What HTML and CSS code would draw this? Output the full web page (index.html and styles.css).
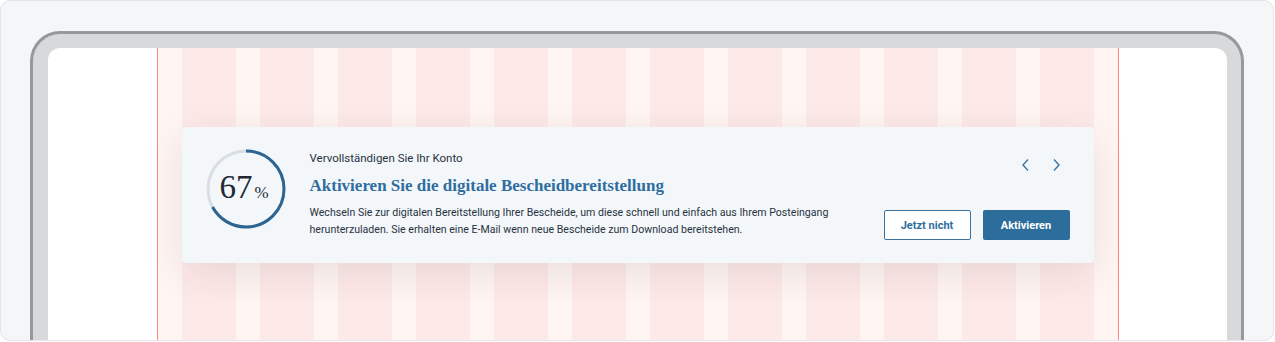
FILE: index.html
```html
<!DOCTYPE html>
<html lang="de">
<head>
  <meta charset="UTF-8" />
  <meta name="viewport" content="width=device-width, initial-scale=1" />
  <title>Konto vervollständigen</title>
  <link rel="stylesheet" href="styles.css">
</head>
<body>
  <div class="frame">
    <div class="device">
      <div class="screen">
        <div class="layout">
          <div class="columns">
            <span></span><span></span><span></span><span></span><span></span><span></span>
            <span></span><span></span><span></span><span></span><span></span><span></span>
          </div>

          <section class="card">
            <div class="progress">
              <svg width="80" height="80" viewBox="0 0 80 80">
                <circle class="progress-track" cx="40" cy="40" r="38" />
                <circle class="progress-bar" cx="40" cy="40" r="38" stroke-dasharray="160 239" transform="rotate(-90 40 40)" />
              </svg>
              <div class="progress-value">67<span>%</span></div>
            </div>

            <div class="content">
              <p class="eyebrow">Vervollständigen Sie Ihr Konto</p>
              <h2 class="title">Aktivieren Sie die digitale Bescheidbereitstellung</h2>
              <p class="text">Wechseln Sie zur digitalen Bereitstellung Ihrer Bescheide, um diese schnell und einfach aus Ihrem Posteingang herunterzuladen. Sie erhalten eine E-Mail wenn neue Bescheide zum Download bereitstehen.</p>
            </div>

            <div class="actions">
              <div class="pager">
                <button class="pager-btn" aria-label="Zurück">
                  <svg width="10" height="14" viewBox="0 0 10 14"><polyline points="7,1.5 2,7 7,12.5" /></svg>
                </button>
                <button class="pager-btn" aria-label="Weiter">
                  <svg width="10" height="14" viewBox="0 0 10 14"><polyline points="3,1.5 8,7 3,12.5" /></svg>
                </button>
              </div>
              <div class="buttons">
                <button class="button button-secondary">Jetzt nicht</button>
                <button class="button button-primary">Aktivieren</button>
              </div>
            </div>
          </section>
        </div>
      </div>
    </div>
  </div>
</body>
</html>
```

FILE: styles.css
```css
* {
  margin: 0;
  padding: 0;
  box-sizing: border-box;
}

body {
  font-family: Roboto, 'Noto Sans', sans-serif;
  color: #28323e;
  background: #ffffff;
}

.frame {
  width: 1274px;
  height: 341px;
  background: #f5f6f8;
  border: 1px solid #e3e5e9;
  border-radius: 10px;
  padding: 30px 0 0 29px;
  overflow: hidden;
}

.device {
  width: 1214px;
  height: 330px;
  background: #d8d9db;
  border: 3px solid #97989a;
  border-bottom: none;
  border-radius: 30px 30px 0 0;
  padding: 14px 14px 0 15px;
}

.screen {
  height: 100%;
  background: #ffffff;
  border-radius: 12px 12px 0 0;
  overflow: hidden;
}

.layout {
  position: relative;
  width: 962px;
  height: 100%;
  margin: 0 auto;
  border-left: 1px solid #ff8585;
  border-right: 1px solid #ff8585;
  background: #fff5f3;
  padding-top: 79px;
}

.columns {
  position: absolute;
  inset: 0;
  display: grid;
  grid-template-columns: repeat(12, 1fr);
  gap: 24px;
  padding: 0 24px;
}

.columns span {
  background: #fee9e9;
}

.card {
  position: relative;
  display: flex;
  min-height: 136px;
  margin: 0 24px;
  padding: 22px 24px 23px 24px;
  background: #f3f7fa;
  border-radius: 4px;
  box-shadow: 0 10px 40px rgba(40, 30, 30, 0.1);
}

.progress {
  position: relative;
  width: 80px;
  height: 80px;
  flex-shrink: 0;
  display: flex;
  align-items: center;
  justify-content: center;
}

.progress svg {
  position: absolute;
  inset: 0;
}

.progress-track,
.progress-bar {
  fill: none;
  stroke-width: 3;
}

.progress-track {
  stroke: #d9dee3;
}

.progress-bar {
  stroke: #2c6492;
}

.progress-value {
  position: relative;
  font-family: 'Liberation Serif', serif;
  font-size: 33px;
  color: #1f2a36;
  margin-left: -3px;
  margin-top: -3px;
}

.progress-value span {
  font-size: 17px;
  margin-left: 2px;
}

.content {
  flex: 1;
  margin-left: 24px;
}

.eyebrow {
  font-size: 11.5px;
  line-height: 18px;
}

.title {
  margin-top: 7px;
  font-family: 'Liberation Serif', serif;
  font-size: 17px;
  line-height: 24px;
  font-weight: 700;
  color: #2f6d9f;
}

.text {
  margin-top: 6px;
  max-width: 545px;
  font-size: 10.6px;
  line-height: 17px;
}

.actions {
  display: flex;
  flex-direction: column;
  justify-content: space-between;
  align-items: flex-end;
}

.pager {
  display: flex;
  gap: 2px;
  margin-top: 2px;
}

.pager-btn {
  width: 28px;
  height: 28px;
  border: none;
  background: none;
  display: flex;
  align-items: center;
  justify-content: center;
  cursor: pointer;
}

.pager-btn polyline {
  fill: none;
  stroke: #3a76a6;
  stroke-width: 1.4;
}

.buttons {
  display: flex;
  gap: 12px;
}

.button {
  width: 87px;
  height: 30px;
  border-radius: 2px;
  font-family: Roboto, 'Noto Sans', sans-serif;
  font-size: 11px;
  font-weight: 700;
  cursor: pointer;
}

.button-secondary {
  background: #ffffff;
  color: #2f6d9f;
  border: 1.5px solid #3a73a0;
}

.button-primary {
  background: #2d6d9c;
  color: #ffffff;
  border: none;
}
```
